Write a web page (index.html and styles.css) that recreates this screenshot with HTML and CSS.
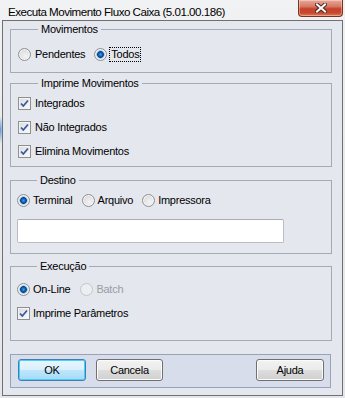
FILE: index.html
```html
<!DOCTYPE html>
<html lang="pt">
<head>
<meta charset="utf-8">
<title>Executa Movimento Fluxo Caixa</title>
<link rel="stylesheet" href="styles.css">
</head>
<body>
<div class="window">
  <div class="titlebar">
    <span class="title">Executa Movimento Fluxo Caixa (5.01.00.186)</span>
    <div class="close">
      <svg width="12" height="10" viewBox="0 0 12 10">
        <path d="M2 1.5 L10 8.5 M10 1.5 L2 8.5" stroke="#4a2a24" stroke-width="4" stroke-linecap="square" fill="none"/>
        <path d="M2 1.5 L10 8.5 M10 1.5 L2 8.5" stroke="#ffffff" stroke-width="2" stroke-linecap="square" fill="none"/>
      </svg>
    </div>
  </div>
  <div class="client">
    <fieldset class="group g-mov">
      <legend>Movimentos</legend>
      <div class="row">
        <label class="opt o-pend"><span class="radio"></span><span>Pendentes</span></label>
        <label class="opt"><span class="radio on"></span><span class="focus">Todos</span></label>
      </div>
    </fieldset>

    <fieldset class="group g-imp">
      <legend>Imprime Movimentos</legend>
      <div class="stack">
        <label class="opt"><span class="check"><svg width="11" height="11" viewBox="0 0 11 11"><path d="M2 5.5 L4.3 8 L9 2.5" stroke="#3b57a3" stroke-width="1.8" fill="none"/></svg></span><span>Integrados</span></label>
        <label class="opt"><span class="check"><svg width="11" height="11" viewBox="0 0 11 11"><path d="M2 5.5 L4.3 8 L9 2.5" stroke="#3b57a3" stroke-width="1.8" fill="none"/></svg></span><span>Não Integrados</span></label>
        <label class="opt"><span class="check"><svg width="11" height="11" viewBox="0 0 11 11"><path d="M2 5.5 L4.3 8 L9 2.5" stroke="#3b57a3" stroke-width="1.8" fill="none"/></svg></span><span>Elimina Movimentos</span></label>
      </div>
    </fieldset>

    <fieldset class="group g-dest">
      <legend>Destino</legend>
      <div class="row">
        <label class="opt o-term"><span class="radio on"></span><span>Terminal</span></label>
        <label class="opt o-arq"><span class="radio"></span><span>Arquivo</span></label>
        <label class="opt"><span class="radio"></span><span>Impressora</span></label>
      </div>
      <div class="textbox"></div>
    </fieldset>

    <fieldset class="group g-exec">
      <legend>Execução</legend>
      <div class="row">
        <label class="opt o-online"><span class="radio on"></span><span>On-Line</span></label>
        <label class="opt disabled"><span class="radio off"></span><span>Batch</span></label>
      </div>
      <label class="opt o-param"><span class="check"><svg width="11" height="11" viewBox="0 0 11 11"><path d="M2 5.5 L4.3 8 L9 2.5" stroke="#3b57a3" stroke-width="1.8" fill="none"/></svg></span><span>Imprime Parâmetros</span></label>
    </fieldset>

    <div class="buttons">
      <button class="btn default">OK</button>
      <button class="btn">Cancela</button>
      <button class="btn push">Ajuda</button>
    </div>
  </div>
</div>
</body>
</html>
```

FILE: styles.css
```css
* { box-sizing: border-box; }
html, body { margin: 0; padding: 0; }
body {
  width: 345px;
  height: 398px;
  overflow: hidden;
  background: radial-gradient(ellipse 4px 14px at 0 130px, #5a9ad6 0, rgba(120,170,220,0.6) 50%, rgba(230,232,234,0) 100%) no-repeat,
              linear-gradient(180deg, #f1f2f3 0, #e8eaec 40%, #e4e6e9 100%);
  font-family: "Liberation Sans", Arial, sans-serif;
  font-size: 11px;
  letter-spacing: -0.25px;
  color: #000;
}
.window {
  display: flex;
  flex-direction: column;
  height: 398px;
  padding: 0 2px 2px 2px;
}
.titlebar {
  height: 23px;
  display: flex;
  justify-content: space-between;
  align-items: flex-start;
  padding-left: 6px;
}
.title {
  font-family: "Liberation Sans", Arial, sans-serif;
  font-size: 11.6px;
  letter-spacing: -0.5px;
  line-height: 14px;
  margin-top: 5px;
  color: #000;
}
.close {
  width: 45px;
  height: 17px;
  border: 1px solid #7d3226;
  border-top: none;
  border-radius: 0 0 4px 4px;
  background: linear-gradient(180deg, #e9a99a 0%, #d67a66 40%, #c4432a 55%, #c9472d 80%, #e07a55 100%);
  box-shadow: inset 0 0 0 1px rgba(255,255,255,0.35);
  display: flex;
  align-items: center;
  justify-content: center;
}
.client {
  flex: 1;
  border: 1px solid #707070;
  background: #e4e7ee;
  padding: 2px 10px 7px 7px;
  display: flex;
  flex-direction: column;
}
.group {
  margin: 0;
  padding: 0;
  border: 1px solid #a3aab8;
  min-width: 0;
}
.group legend {
  margin-left: 20px;
  padding: 0 3px;
  line-height: 13px;
  height: 13px;
  color: #000;
}
.row { display: flex; align-items: center; height: 13px; }
.stack { display: flex; flex-direction: column; gap: 11px; }
.opt {
  display: inline-flex;
  align-items: center;
  height: 13px;
  line-height: 13px;
  gap: 4px;
  white-space: nowrap;
}
.g-mov { padding: 12px 0 11px 7px; }
.g-imp { margin-top: 4px; padding: 7px 0 8px 7px; }
.g-dest { margin-top: 7px; padding: 7px 0 10px 6px; }
.g-exec { margin-top: 6px; padding: 10px 0 19px 6px; }

.o-pend { margin-right: 9px; }
.o-term { margin-right: 9px; }
.o-arq { margin-right: 9px; }
.g-dest .opt { gap: 3px; }
.o-online { margin-right: 10px; }
.g-exec .opt { gap: 3px; }
.o-param { margin-top: 11px; }

.focus {
  outline: 1px dotted #000;
  outline-offset: 0;
  padding: 0 1px;
  margin-left: -1px;
}
.disabled { color: #9a9ca2; }

.radio {
  width: 13px;
  height: 13px;
  flex: none;
  border-radius: 50%;
  border: 1px solid #8e9094;
  background: radial-gradient(circle at 60% 65%, #f4f4f4 0, #dcdcdc 70%, #c9c9c9 100%);
  box-shadow: inset 0 0 0 1px #f6f6f6;
}
.radio.on {
  background: radial-gradient(circle at 50% 50%, #3fa0e8 0, #0e5fb4 2px, #0a3f82 3px, #7fb3dd 3.6px, #dce6ef 4.5px, #eef1f4 100%);
  box-shadow: inset 0 0 0 1px #f2f2f2;
}
.radio.off {
  border-color: #c4c6ca;
  background: #eceef1;
  box-shadow: none;
}
.check {
  width: 13px;
  height: 13px;
  flex: none;
  border: 1px solid #8e8f8f;
  background: linear-gradient(135deg, #d6d8dc 0%, #eef0f2 60%, #fafafa 100%);
  box-shadow: inset 0 0 0 1px #f4f4f4;
  display: flex;
  align-items: center;
  justify-content: center;
}
.textbox {
  margin-top: 12px;
  width: 267px;
  height: 24px;
  background: #fff;
  border: 1px solid #b9bcc3;
  border-top-color: #a9acb3;
  border-radius: 2px;
}
.buttons {
  margin-top: 13px;
  margin-right: 1px;
  border: 1px solid #99a2b6;
  background: #d7ddea;
  padding: 4px 6px 6px 7px;
  display: flex;
  align-items: center;
  height: 34px;
}
.btn {
  font-family: "Liberation Sans", Arial, sans-serif;
  font-size: 11px;
  letter-spacing: -0.25px;
  height: 22px;
  width: 68px;
  padding: 0;
  border: 1px solid #707070;
  border-radius: 3px;
  background: linear-gradient(180deg, #f2f2f2 0%, #ebebeb 48%, #dddddd 52%, #cfcfcf 100%);
  box-shadow: inset 0 0 0 1px #fbfbfb;
  color: #000;
}
.btn + .btn { margin-left: 10px; }
.btn:nth-child(2) { width: 67px; }
.btn.default {
  border-color: #3c7fb1;
  background: linear-gradient(180deg, #eaf6fd 0%, #d9f0fc 48%, #bee6fd 52%, #a7d9f5 100%);
  box-shadow: inset 0 0 0 1px #48d0fa;
}
.btn.push { margin-left: auto; }
```
